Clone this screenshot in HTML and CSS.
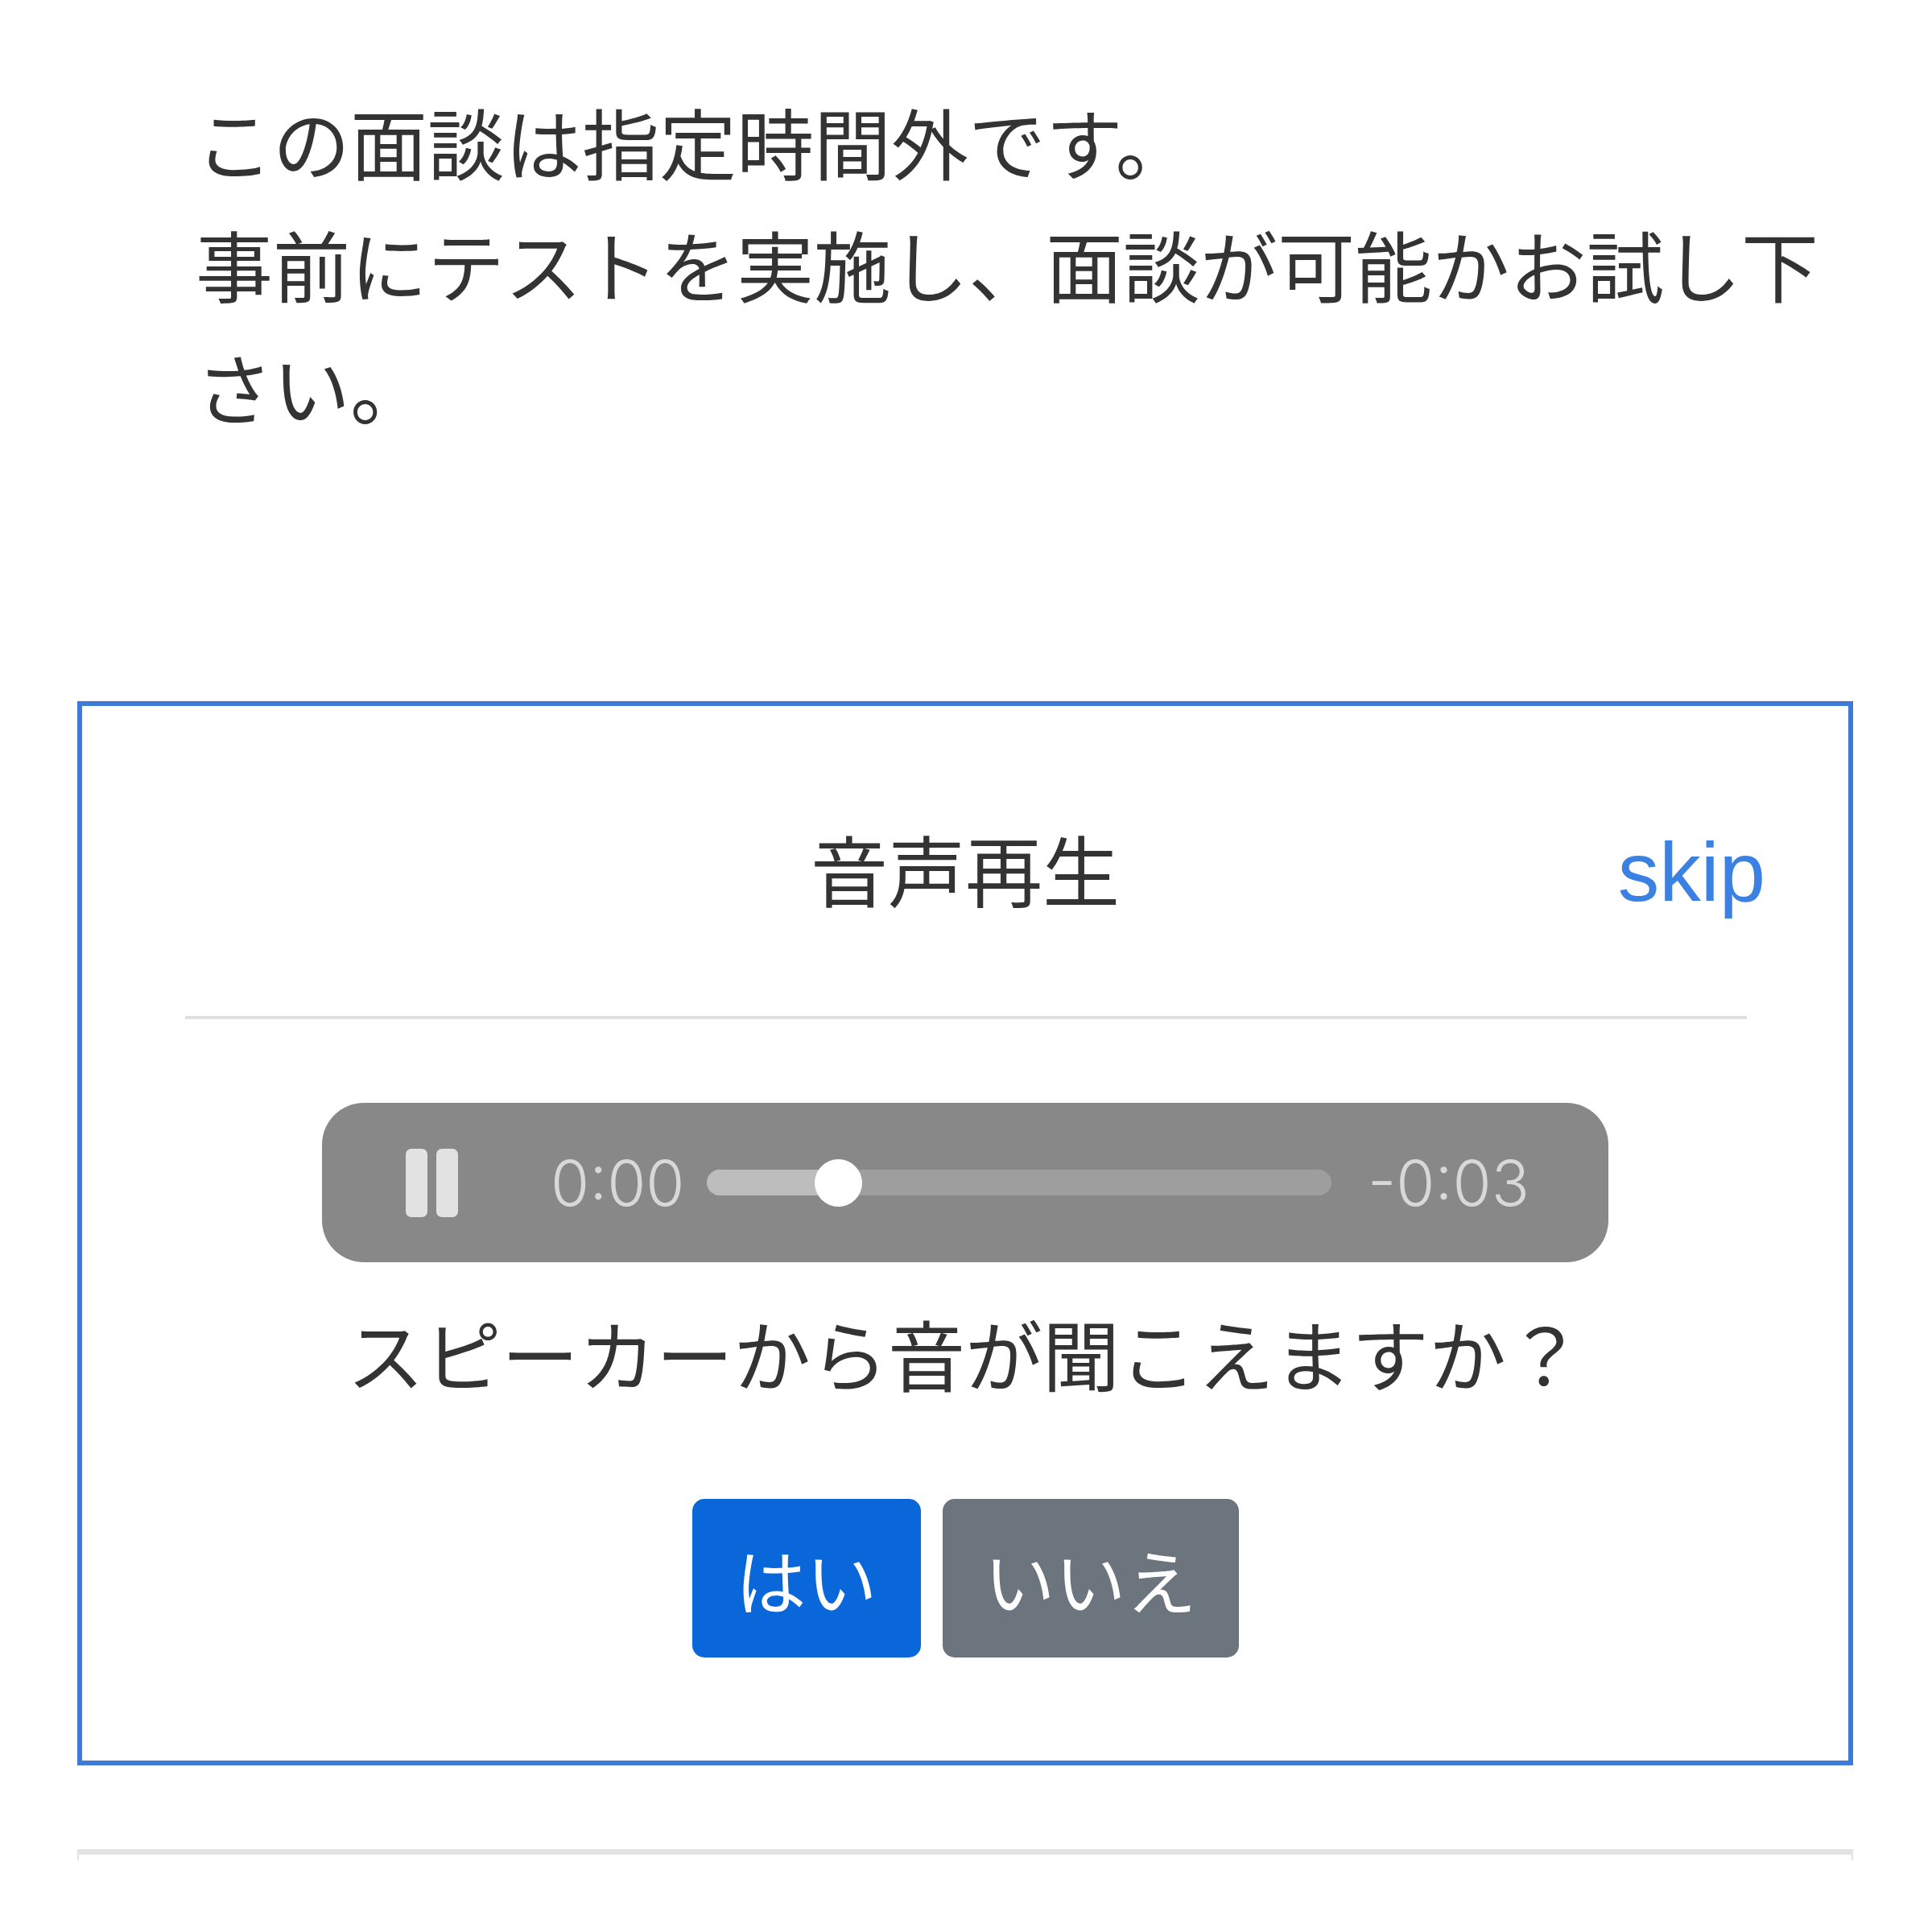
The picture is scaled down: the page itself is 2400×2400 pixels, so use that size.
FILE: index.html
```html
<!DOCTYPE html>
<html lang="ja">
<head>
<meta charset="utf-8">
<link rel="stylesheet" href="styles.css">
</head>
<body>
<div class="page">
  <p class="notice">この面談は指定時間外です。<br>事前にテストを実施し、面談が可能かお試し下さい。</p>
  <section class="card">
    <header class="card-head">
      <span class="spacer"></span>
      <h2 class="title">音声再生</h2>
      <a class="skip" href="#">skip</a>
    </header>
    <hr class="divider">
    <div class="player">
      <div class="pause"><span class="bar"></span><span class="bar"></span></div>
      <span class="time time-cur">0:00</span>
      <div class="track">
        <div class="played" style="width:163px"></div>
        <div class="thumb" style="left:163px"></div>
      </div>
      <span class="time time-left">-0:03</span>
    </div>
    <p class="question">スピーカーから音が聞こえますか？</p>
    <div class="actions">
      <button class="btn btn-yes">はい</button>
      <button class="btn btn-no">いいえ</button>
    </div>
  </section>
  <div class="next-box"></div>
</div>
</body>
</html>
```
FILE: styles.css
```css
html, body {
  margin: 0;
  padding: 0;
  background: #ffffff;
}
body {
  font-family: "Noto Sans CJK JP", "Noto Sans", sans-serif;
  color: #333333;
}
.page {
  width: 2206px;
  margin-left: 96px;
  padding-top: 99px;
}
.notice {
  margin: 0;
  padding-left: 147px;
  font-size: 96px;
  line-height: 152px;
  color: #333333;
}
.card {
  margin-top: 316px;
  border: 6px solid #3d7bd9;
  padding: 129px 0 128px;
}
.card-head {
  display: grid;
  grid-template-columns: 1fr auto 1fr;
  align-items: baseline;
}
.title {
  margin: 0;
  font-size: 96px;
  line-height: 144px;
  font-weight: 400;
  color: #333333;
}
.skip {
  justify-self: end;
  margin-right: 103px;
  font-family: "Liberation Sans", "Noto Sans", sans-serif;
  font-size: 103px;
  line-height: 144px;
  color: #3b80e3;
  text-decoration: none;
}
.divider {
  margin: 106px 126px 0 128px;
  border: 0;
  height: 4px;
  background: #e0e0e0;
}
.player {
  width: 1598px;
  height: 198px;
  margin: 104px auto 0;
  box-sizing: border-box;
  background: #888888;
  border-radius: 52px;
  display: flex;
  align-items: center;
  padding: 0 106px 0 104px;
}
.pause {
  display: flex;
  gap: 11px;
  width: 65px;
  flex: none;
}
.bar {
  width: 27px;
  height: 85px;
  background: #e2e2e2;
  border-radius: 7px;
}
.time {
  font-family: "Inter", "Noto Sans", sans-serif;
  font-weight: 300;
  font-size: 78px;
  color: #d8d8d8;
  flex: none;
  white-space: nowrap;
}
.time-cur {
  width: 157px;
  margin-left: 115px;
}
.time-left {
  width: 193px;
  margin-left: 45px;
  text-align: right;
}
.track {
  flex: 1;
  margin-left: 37px;
  height: 32px;
  border-radius: 16px;
  background: #9e9e9e;
  position: relative;
}
.played {
  height: 100%;
  border-radius: 16px 0 0 16px;
  background: #bdbdbd;
}
.thumb {
  position: absolute;
  top: 50%;
  width: 59px;
  height: 59px;
  margin: -29.5px 0 0 -29.5px;
  border-radius: 50%;
  background: #ffffff;
}
.question {
  margin: 40px 0 0;
  font-size: 96px;
  line-height: 144px;
  text-align: center;
  color: #333333;
}
.actions {
  margin-top: 110px;
  display: flex;
  justify-content: center;
  gap: 27px;
}
.btn {
  height: 197px;
  border: 0;
  border-radius: 15px;
  font-family: "Noto Sans CJK JP", sans-serif;
  font-size: 88px;
  color: #ffffff;
  padding: 0;
  display: flex;
  align-items: center;
  justify-content: center;
}
.btn-yes {
  width: 284px;
  background: #0a67d9;
}
.btn-no {
  width: 368px;
  background: #6c757d;
}
.next-box {
  margin-top: 104px;
  height: 7px;
  border-top: 7px solid #e3e3e3;
  border-left: 2px solid #e3e3e3;
  border-right: 2px solid #e3e3e3;
}
```
